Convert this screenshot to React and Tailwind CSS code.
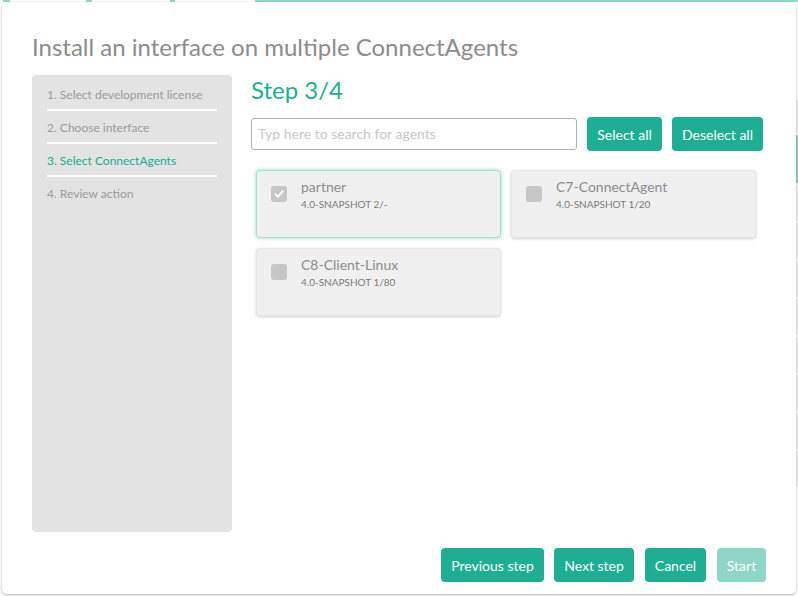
import React from 'react';

const steps = [
  { label: '1. Select development license' },
  { label: '2. Choose interface' },
  { label: '3. Select ConnectAgents', active: true },
  { label: '4. Review action', last: true },
];

const agents = [
  { name: 'partner', version: '4.0-SNAPSHOT 2/-', checked: true },
  { name: 'C7-ConnectAgent', version: '4.0-SNAPSHOT 1/20' },
  { name: 'C8-Client-Linux', version: '4.0-SNAPSHOT 1/80' },
];

const Checkbox = ({ checked }) => (
  <div className="w-4 h-4 rounded-[3px] bg-[#c6c6c6] flex items-center justify-center shrink-0">
    {checked && (
      <svg width="10" height="10" viewBox="0 0 10 10">
        <path d="M1.5 5.2 L4 7.6 L8.6 2.4" fill="none" stroke="white" strokeWidth="2" strokeLinecap="round" strokeLinejoin="round" />
      </svg>
    )}
  </div>
);

const AgentCard = ({ agent }) => (
  <div
    className={
      agent.checked
        ? 'h-[68px] rounded-[4px] bg-[#f0f0f0] border border-[#9fe0d2] shadow-[0_0_4px_rgba(32,176,147,0.45)] flex gap-[14px] pl-[14px] pt-[14px]'
        : 'h-[68px] rounded-[4px] bg-[#f0f0f0] border border-[#e6e6e6] shadow-[0_1px_3px_rgba(0,0,0,0.18)] flex gap-[14px] pl-[14px] pt-[14px]'
    }
  >
    <div className="pt-[1px]">
      <Checkbox checked={agent.checked} />
    </div>
    <div className="-mt-[8px]">
      <div className="text-[14px] leading-[20px] text-[#8c8c8c]">{agent.name}</div>
      <div className="text-[10px] leading-[14px] text-[#7a7a7a]">{agent.version}</div>
    </div>
  </div>
);

const Button = ({ children, disabled, className = '' }) => (
  <button
    className={`h-[34px] rounded-[4px] text-[14px] text-white whitespace-nowrap text-center ${disabled ? 'bg-[#8fd6c8]' : 'bg-[#1eae92]'} ${className}`}
  >
    {children}
  </button>
);

const App = () => {
  return (
    <div className="relative w-[798px] h-[596px] overflow-hidden bg-white font-['Lato','Liberation_Sans',sans-serif]">
      {/* page behind the dialog */}
      <div className="flex h-[2px]">
        <div className="w-[3px]" />
        <div className="w-[7px] bg-[#93d8ca]" />
        <div className="w-[76px]" />
        <div className="w-[6px] bg-[#93d8ca]" />
        <div className="w-[78px]" />
        <div className="w-[5px] bg-[#93d8ca]" />
        <div className="w-[80px]" />
        <div className="flex-1 bg-[#93d8ca]" />
      </div>
      <div className="absolute right-0 top-[100px] w-[2px] flex flex-col gap-[2px]">
        <div className="h-[33px] bg-[#f0f0f0]" />
        <div className="h-[48px] bg-[#8fd6c8]" />
        <div className="h-[36px] bg-[#f0f0f0]" />
        <div className="h-[36px] bg-[#f0f0f0]" />
        <div className="h-[36px] bg-[#f0f0f0]" />
        <div className="h-[36px] bg-[#f0f0f0]" />
        <div className="h-[36px] bg-[#f0f0f0]" />
        <div className="h-[36px] bg-[#f0f0f0]" />
        <div className="h-[36px] bg-[#f0f0f0]" />
        <div className="h-[36px] bg-[#f0f0f0]" />
      </div>

      {/* dialog */}
      <div className="absolute left-[2px] top-[2px] w-[794px] h-[592px] bg-white rounded-[5px] shadow-[0_1px_3px_rgba(0,0,0,0.3)] flex flex-col px-[30px] pt-[30px] pb-[12px]">
        <h1 className="text-[24px] leading-[30px] text-[#8c8c8c]">Install an interface on multiple ConnectAgents</h1>

        <div className="flex gap-[19px] mt-[13px] h-[457px]">
          <div className="w-[200px] shrink-0 bg-[#e3e3e3] rounded-[4px] pt-[3px]">
            {steps.map((s) => (
              <div
                key={s.label}
                className={`mx-[15px] pt-[9px] pb-[6px] text-[12px] leading-[16px] ${s.active ? 'text-[#1aab8f]' : 'text-[#9a9a9a]'} ${s.last ? '' : 'border-b-2 border-white'}`}
              >
                {s.label}
              </div>
            ))}
          </div>

          <div className="flex-1 pr-[3px]">
            <h2 className="text-[24px] leading-[30px] text-[#1eae92]">Step 3/4</h2>
            <div className="flex gap-[10px] mt-[12px]">
              <input
                className="flex-1 min-w-0 h-[32px] mt-[1px] border border-[#b0b0b0] rounded-[3px] px-[6px] pb-[1px] text-[14px] placeholder:text-[#c8c8c8] outline-none"
                placeholder="Typ here to search for agents"
              />
              <Button className="w-[75px]">Select all</Button>
              <Button className="w-[91px]">Deselect all</Button>
            </div>
            <div className="grid grid-cols-2 gap-[10px] mt-[19px] ml-[5px] w-[500px]">
              {agents.map((a) => (
                <AgentCard key={a.name} agent={a} />
              ))}
            </div>
          </div>
        </div>

        <div className="flex justify-end gap-[10px] mt-[16px]">
          <Button className="w-[103px]">Previous step</Button>
          <Button className="w-[80px]">Next step</Button>
          <Button className="w-[61px] ml-[1px]">Cancel</Button>
          <Button disabled className="w-[49px] ml-[1px]">Start</Button>
        </div>
      </div>
    </div>
  );
};

export default App;
